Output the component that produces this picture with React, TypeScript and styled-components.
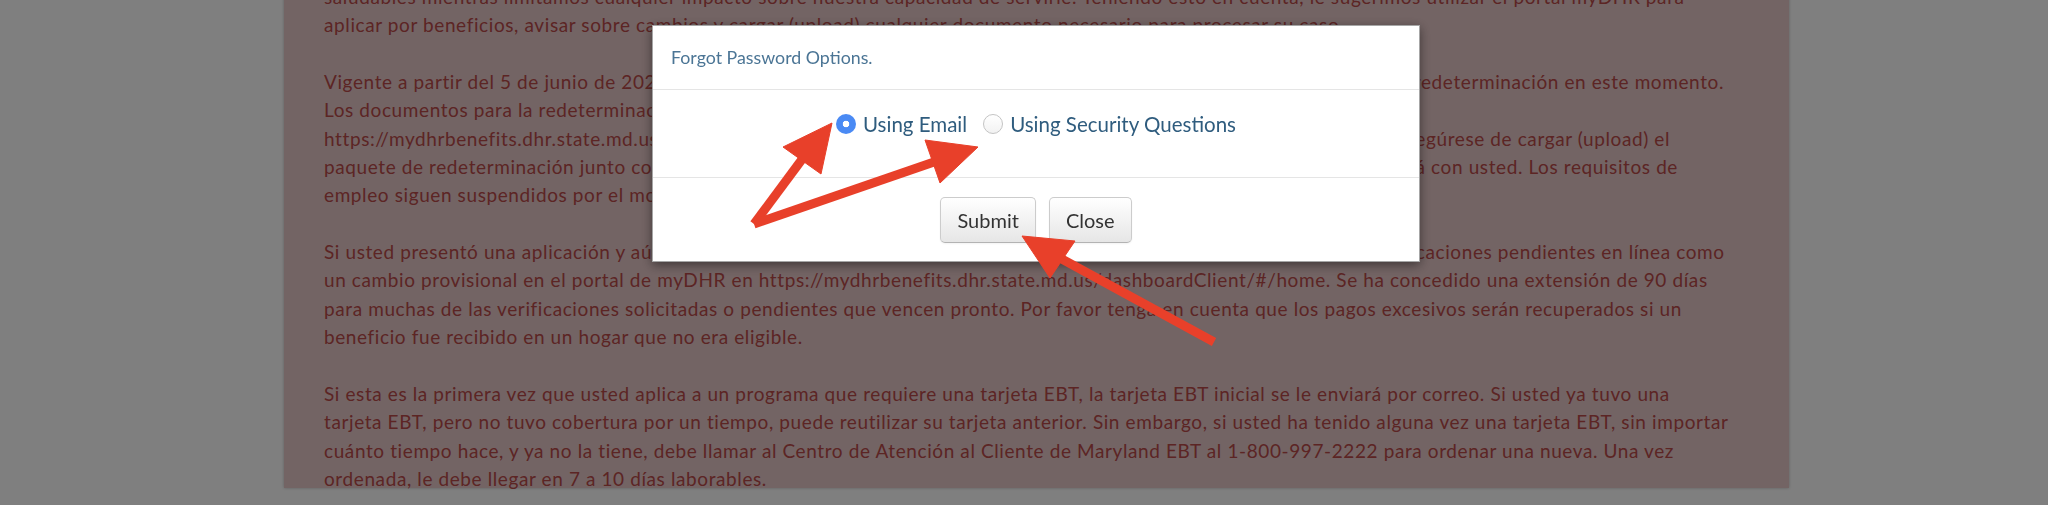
import React from 'react';
import styled, { createGlobalStyle } from 'styled-components';

const GlobalStyle = createGlobalStyle`
    html, body {
        margin: 0;
        padding: 0;
        background: #ffffff;
    }
    body {
        font-family: Lato, 'Noto Sans', sans-serif;
    }
`;

const paragraphs: string[][] = [
    [
        'saludables mientras limitamos cualquier impacto sobre nuestra capacidad de servirle. Teniendo esto en cuenta, le sugerimos utilizar el portal myDHR para',
        'aplicar por beneficios, avisar sobre cambios y cargar (upload) cualquier documento necesario para procesar su caso.',
    ],
    [
        'Vigente a partir del 5 de junio de 2020, los clientes que deben renovar sus beneficios de SNAP y TCA podrán completar su redeterminación en este momento.',
        'Los documentos para la redeterminación serán enviados por correo y también estarán disponibles en línea en',
        'https://mydhrbenefits.dhr.state.md.us/dashboardClient/#/home. Una vez que termine su formulario de redeterminación, asegúrese de cargar (upload) el',
        'paquete de redeterminación junto con los documentos de verificación requeridos y un especialista de su caso se comunicará con usted. Los requisitos de',
        'empleo siguen suspendidos por el momento.',
    ],
    [
        'Si usted presentó una aplicación y aún no ha podido remitir sus documentos de verificación, puede cargar (upload) las verificaciones pendientes en línea como',
        'un cambio provisional en el portal de myDHR en https://mydhrbenefits.dhr.state.md.us/dashboardClient/#/home. Se ha concedido una extensión de 90 días',
        'para muchas de las verificaciones solicitadas o pendientes que vencen pronto. Por favor tenga en cuenta que los pagos excesivos serán recuperados si un',
        'beneficio fue recibido en un hogar que no era eligible.',
    ],
    [
        'Si esta es la primera vez que usted aplica a un programa que requiere una tarjeta EBT, la tarjeta EBT inicial se le enviará por correo. Si usted ya tuvo una',
        'tarjeta EBT, pero no tuvo cobertura por un tiempo, puede reutilizar su tarjeta anterior. Sin embargo, si usted ha tenido alguna vez una tarjeta EBT, sin importar',
        'cuánto tiempo hace, y ya no la tiene, debe llamar al Centro de Atención al Cliente de Maryland EBT al 1-800-997-2222 para ordenar una nueva. Una vez',
        'ordenada, le debe llegar en 7 a 10 días laborables.',
    ],
];

const options = [
    { id: 'email', label: 'Using Email', checked: true },
    { id: 'questions', label: 'Using Security Questions', checked: false },
];

const App = () => {
    return (
        <>
            <GlobalStyle />
            <Page>
                <NoticePanel>
                    <NoticeText>
                        {paragraphs.map((lines, i) => (
                            <Paragraph key={i}>
                                {lines.map((line, j) => (
                                    <Line key={j}>{line}</Line>
                                ))}
                            </Paragraph>
                        ))}
                    </NoticeText>
                </NoticePanel>
            </Page>
            <Backdrop />
            <Modal>
                <ModalHeader>Forgot Password Options.</ModalHeader>
                <ModalBody>
                    <OptionGroup>
                        {options.map((o) => (
                            <Option key={o.id}>
                                <Radio checked={o.checked} />
                                <OptionLabel>{o.label}</OptionLabel>
                            </Option>
                        ))}
                    </OptionGroup>
                </ModalBody>
                <ModalFooter>
                    <Button>Submit</Button>
                    <Button>Close</Button>
                </ModalFooter>
            </Modal>
            <Arrows viewBox="0 0 2048 505" width="2048" height="505">
                <g fill="#e8402a" stroke="#e8402a">
                    <line x1="754" y1="224" x2="803" y2="158" strokeWidth="9" />
                    <polygon points="832,123 783,147 821,174" strokeWidth="1" />
                    <line x1="754" y1="224" x2="934" y2="162" strokeWidth="9" />
                    <polygon points="978,147 925,140 940,183" strokeWidth="1" />
                    <line x1="1060" y1="258" x2="1214" y2="342" strokeWidth="9" />
                    <polygon points="1022,236 1075,241 1050,278" strokeWidth="1" />
                </g>
            </Arrows>
        </>
    );
};

const Page = styled.div`
    height: 505px;
    overflow: hidden;
    padding: 0 259px 0 284px;
`;

const NoticePanel = styled.div`
    height: 100%;
    background: #e6c8c8;
    box-shadow: 0 0 3px rgba(0, 0, 0, 0.25);
    padding: 0 40px;
`;

const NoticeText = styled.div`
    margin-top: -17px;
    color: #b94a48;
    font-size: 19px;
    letter-spacing: 0.6px;
    line-height: 28.35px;
`;

const Paragraph = styled.div`
    margin-bottom: 28.35px;
`;

const Line = styled.span`
    display: block;
    white-space: nowrap;
`;

const Backdrop = styled.div`
    position: fixed;
    inset: 0;
    background: rgba(0, 0, 0, 0.5);
    z-index: 1;
`;

const Modal = styled.div`
    position: fixed;
    top: 25px;
    left: 652px;
    width: 768px;
    box-sizing: border-box;
    background: #ffffff;
    border: 1px solid rgba(0, 0, 0, 0.35);
    box-shadow: 0 3px 10px rgba(0, 0, 0, 0.45);
    z-index: 2;
    display: flex;
    flex-direction: column;
`;

const ModalHeader = styled.div`
    padding: 20px 18px 21px;
    border-bottom: 1px solid #e5e5e5;
    color: #4b7595;
    font-size: 17.8px;
    line-height: 22px;
`;

const ModalBody = styled.div`
    height: 88px;
    box-sizing: border-box;
    padding-top: 22px;
    border-bottom: 1px solid #e5e5e5;
`;

const OptionGroup = styled.div`
    display: flex;
    justify-content: center;
    gap: 16px;
`;

const Option = styled.label`
    display: flex;
    align-items: center;
    gap: 7px;
`;

const Radio = styled.span<{ checked: boolean }>`
    width: 20px;
    height: 20px;
    box-sizing: border-box;
    border-radius: 50%;
    border: ${(p) => (p.checked ? 'none' : '1px solid #c4c4c4')};
    background: ${(p) =>
        p.checked
            ? 'radial-gradient(circle, #ffffff 0 3px, #4a8af4 3.6px)'
            : 'linear-gradient(#ffffff, #f2f2f2)'};
`;

const OptionLabel = styled.span`
    color: #2f5c7e;
    font-size: 20.5px;
    line-height: 24px;
`;

const ModalFooter = styled.div`
    display: flex;
    justify-content: center;
    gap: 13px;
    padding: 19px 0 18px;
`;

const Button = styled.button`
    height: 46px;
    padding: 0 16px;
    font-family: Lato, 'Noto Sans', sans-serif;
    font-size: 20px;
    color: #333333;
    background: linear-gradient(#ffffff, #e6e6e6);
    border: 1px solid #cccccc;
    border-bottom-color: #b3b3b3;
    border-radius: 5px;
    box-shadow: inset 0 1px 0 rgba(255, 255, 255, 0.2), 0 1px 2px rgba(0, 0, 0, 0.05);
`;

const Arrows = styled.svg`
    position: fixed;
    top: 0;
    left: 0;
    z-index: 3;
    pointer-events: none;
`;

export default App;
